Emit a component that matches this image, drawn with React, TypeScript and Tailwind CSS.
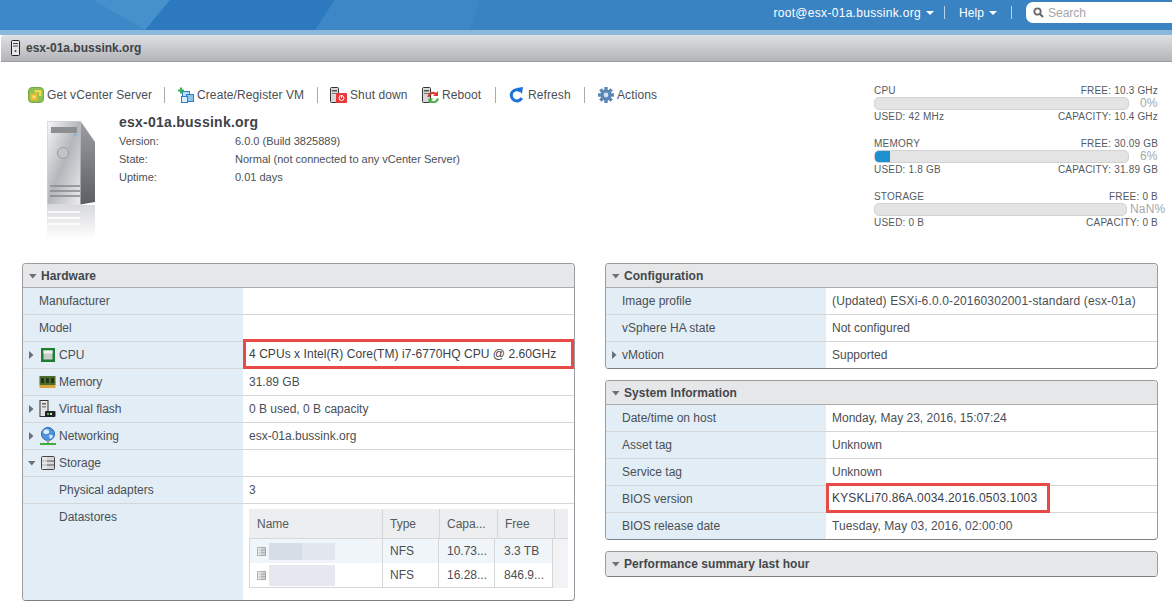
import React from "react";

const Tri = ({ open = false }: { open?: boolean }) => (
  <svg width="8" height="8" viewBox="0 0 8 8" className="shrink-0">
    {open ? <path d="M0 2h7.5L3.75 6.5z" fill="#6b7076" /> : <path d="M1 0v8l4.5-4z" fill="#6b7076" />}
  </svg>
);

const CpuIcon = () => (
  <svg width="14" height="14" viewBox="0 0 14 14"><rect x="0" y="0" width="14" height="14" fill="#1e7d33" /><rect x="2.5" y="2.5" width="9" height="9" fill="#c9cbc9" /><rect x="2.5" y="2.5" width="9" height="3" fill="#eeeeee" /></svg>
);
const MemIcon = () => (
  <svg width="17" height="14" viewBox="0 0 17 14"><rect x="0.5" y="1" width="16" height="9" fill="#4d6b2f" /><rect x="2" y="3" width="3" height="5" fill="#26351a" /><rect x="7" y="3" width="3" height="5" fill="#26351a" /><rect x="12" y="3" width="3" height="5" fill="#26351a" /><rect x="0.5" y="10" width="16" height="3" fill="#d9a63a" /></svg>
);
const FlashIcon = () => (
  <svg width="17" height="18" viewBox="0 0 17 18"><rect x="1" y="0.5" width="8" height="16" fill="#e4e5e7" stroke="#333" /><rect x="3" y="3" width="4" height="1.5" fill="#666" /><rect x="3" y="6" width="4" height="1.5" fill="#888" /><rect x="6" y="11" width="10.5" height="6" rx="1" fill="#222" /><rect x="8" y="13" width="2" height="2" fill="#4fc04f" /><rect x="11" y="13" width="2" height="2" fill="#ddd" /></svg>
);
const NetIcon = () => (
  <svg width="16" height="18" viewBox="0 0 16 18"><circle cx="8" cy="7" r="6.5" fill="#4f93dc" stroke="#2a66b0" /><path d="M4 3q4-2 5 1t-3 3-2-4zM9 8q3-1 4 1-1 3-3 3z" fill="#dcebf8" /><rect x="7" y="13" width="2" height="3" fill="#999" /><rect x="0" y="16" width="16" height="2" fill="#3fae3f" /></svg>
);
const StorIcon = ({ s = 14, light = false }: { s?: number; light?: boolean }) => (
  <svg width={s} height={s} viewBox="0 0 14 14"><rect x="0.5" y="0.5" width="13" height="13" rx="1" fill="#d6d7d8" stroke={light ? "#777" : "#444"} /><path d="M1 5h12M1 9h12" stroke={light ? "#888" : "#555"} /><rect x="1" y="1" width="5" height="12" fill="#f2f2f2" opacity="0.6" /></svg>
);

const VcIcon = () => (
  <svg width="16" height="16" viewBox="0 0 16 16"><rect x="0.5" y="0.5" width="15" height="15" rx="3.5" fill="#8cc152" stroke="#74ab3e" /><path d="M6.5 3h6.5a.5.5 0 0 1 .5.5V9h-2.5V5.5h-4.5z" fill="#f6d84a" /><rect x="2.5" y="6.5" width="7" height="7" rx="1" fill="#eeb92c" /><rect x="4.5" y="8.5" width="3" height="3" fill="#f8e27a" /></svg>
);
const CreateIcon = () => (
  <svg width="16" height="16" viewBox="0 0 16 16"><rect x="4.5" y="4.5" width="7" height="7" fill="#bfe0f6" stroke="#2a7fc4" /><rect x="8.5" y="7.5" width="7" height="7" fill="#8cc4ec" stroke="#2a7fc4" /><rect x="3.5" y="9.5" width="6" height="6" fill="#d8eefb" stroke="#2a7fc4" /><path d="M2 0.5h2v2h2v2H4v2H2v-2H0v-2h2z" fill="#36b24a" /></svg>
);
const HostBase = () => (
  <>
    <rect x="0.5" y="0.5" width="8" height="15" rx="1" fill="#d8d8d8" stroke="#333" />
    <rect x="2" y="3" width="5" height="1.5" fill="#555" />
    <rect x="2" y="6" width="5" height="1" fill="#777" />
  </>
);
const ShutIcon = () => (
  <svg width="17" height="16" viewBox="0 0 17 16"><HostBase /><rect x="6" y="6" width="11" height="10" rx="1" fill="#e8383a" /><circle cx="11.5" cy="11" r="2.5" fill="none" stroke="#fff" /><path d="M11.5 8.5v2.5" stroke="#fff" /></svg>
);
const RebootIcon = () => (
  <svg width="17" height="16" viewBox="0 0 17 16"><HostBase /><path d="M6.5 10A4.5 4.5 0 0 1 14 7" fill="none" stroke="#d93a2f" strokeWidth="2.2" /><path d="M11 9h5V4z" fill="#d93a2f" /><path d="M16 11.5A4.5 4.5 0 0 1 8.5 14" fill="none" stroke="#43ad3c" strokeWidth="2.2" /><path d="M11.5 11.5H6.5V16z" fill="#43ad3c" /></svg>
);
const RefreshIcon = () => (
  <svg width="15" height="16" viewBox="0 0 15 16"><path d="M11.5 4A5.6 5.6 0 1 0 12.8 11" fill="none" stroke="#1b73d8" strokeWidth="3" /><path d="M7.5 1L14 0l-1 7z" fill="#1b73d8" /></svg>
);
const GearIcon = () => (
  <svg width="16" height="16" viewBox="0 0 16 16"><g fill="#5b86b4"><circle cx="8" cy="8" r="5.5" /><rect x="6.3" y="0" width="3.4" height="16" /><rect x="0" y="6.3" width="16" height="3.4" /><rect x="6.3" y="0" width="3.4" height="16" transform="rotate(45 8 8)" /><rect x="6.3" y="0" width="3.4" height="16" transform="rotate(-45 8 8)" /></g><circle cx="8" cy="8" r="2.4" fill="#cfe0f0" /></svg>
);

const ServerArt = () => (
  <svg width="48" height="118" viewBox="0 0 48 118" className="block">
    <defs>
      <linearGradient id="fr" x1="0" y1="0" x2="1" y2="1"><stop offset="0" stopColor="#f6f6f7" /><stop offset="0.5" stopColor="#b4b6bb" /><stop offset="1" stopColor="#ececee" /></linearGradient>
      <linearGradient id="sd" x1="0" y1="0" x2="0" y2="1"><stop offset="0" stopColor="#9c9ea4" /><stop offset="1" stopColor="#5c5e64" /></linearGradient>
      <linearGradient id="rf" x1="0" y1="0" x2="0" y2="1"><stop offset="0" stopColor="#d8d9dc" /><stop offset="1" stopColor="#ffffff" /></linearGradient>
    </defs>
    <rect x="0.25" y="0.25" width="33" height="83" fill="url(#fr)" stroke="#c5c6c9" strokeWidth="0.5" />
    <path d="M33.5 0L48 21v60l-14.5 2.5z" fill="url(#sd)" />
    <rect x="4" y="6" width="26" height="6" fill="#8d8e90" />
    <circle cx="16" cy="32" r="5.5" fill="#c2c3c7" stroke="#9a9ba0" />
    <rect x="27" y="13" width="2" height="2" fill="#6bb6f0" />
    <path d="M3 65h30M3 70h30M3 75h30" stroke="#85868a" strokeWidth="1.4" />
    <rect x="0" y="84" width="48" height="34" fill="url(#rf)" />
    <path d="M1 91h32M1 97h32M1 103h32" stroke="#ffffff" strokeWidth="1.4" />
  </svg>
);

const Tool = ({ icon, label, w, sep, end = "" }: { icon: React.ReactNode; label: string; w: string; sep?: string; end?: string }) => (
  <div className={`flex items-center ${end}`}>
    <span className="flex w-[17px] justify-center">{icon}</span>
    <span className={`ml-[3px] text-[12px] tracking-[0.1px] whitespace-nowrap text-[#4a4f55] ${w}`}>{label}</span>
    {sep && <span className={`h-[16px] w-px bg-[#a8aaad] ${sep}`} />}
  </div>
);

const Gauge = ({ name, free, used, cap, pct, fill = 0, wide = false }: { name: string; free: string; used: string; cap: string; pct: string; fill?: number; wide?: boolean }) => (
  <div className="h-[53px] text-[10px] leading-[13px] tracking-[0.2px] text-[#555a60]">
    <div className="flex justify-between pr-[14px]"><span>{name}</span><span>{free}</span></div>
    <div className="flex h-[13px] items-center">
      <div className={`h-[13px] overflow-hidden rounded-[5px] border border-[#d2d2d2] bg-[#e4e4e4] ${wide ? "w-[253px]" : "w-[255px]"}`}>
        <div className="h-full bg-[#1e90d0]" style={{ width: `${fill}px` }} />
      </div>
      <span className={`text-[12px] text-[#a5a8ab] ${wide ? "ml-[3px]" : "ml-[11px]"}`}>{pct}</span>
    </div>
    <div className="flex justify-between pr-[14px]"><span>{used}</span><span>{cap}</span></div>
  </div>
);

type RowData = { label: string; value?: React.ReactNode; tri?: "open" | "closed"; icon?: React.ReactNode; indent?: boolean };

const Row = ({ r, last }: { r: RowData; last: boolean }) => (
  <div className={`flex ${last ? "h-[26px]" : "h-[27px] border-b border-[#d4d6d8]"}`}>
    <div className="flex w-[220px] shrink-0 items-center bg-[#e2edf6]">
      <span className="flex w-[16px] pl-[5px]">{r.tri && <Tri open={r.tri === "open"} />}</span>
      <span className="flex items-center">
        {r.icon ? <span className="flex w-[17px] justify-center">{r.icon}</span> : null}
        <span className={r.indent ? "ml-[20px]" : r.icon ? "ml-[3px]" : "ml-0"}>{r.label}</span>
      </span>
    </div>
    <div className="flex min-w-0 flex-1 items-center pl-[6px]">{r.value}</div>
  </div>
);

const Panel = ({ title, rows, children, collapsed = false }: { title: string; rows?: RowData[]; children?: React.ReactNode; collapsed?: boolean }) => (
  <div className="overflow-hidden rounded-[4px] border border-[#9a9c9f] border-b-[#7d7f82] text-[12px] text-[#4a4f55]">
    <div className={`flex h-[24px] items-center gap-[4px] bg-[#e6e7e8] pl-[6px] text-[12px] font-bold tracking-[0.05px] text-[#43474d] ${collapsed ? "" : "border-b border-[#a9abad]"}`}>
      <Tri open />
      <span>{title}</span>
    </div>
    {rows?.map((r, i) => (
      <Row key={r.label} r={r} last={i === rows.length - 1 && !children} />
    ))}
    {children}
  </div>
);

const Red = ({ children, w, t }: { children: React.ReactNode; w: string; t: string }) => (
  <span className={`-ml-[6px] mb-[2px] flex h-[30px] items-center border-[3px] border-[#e84a46] pl-[3px] text-[#3c4046] ${w} ${t}`}>{children}</span>
);

const BodyCell = ({ children, pl = "pl-[7px]", line = true }: { children: React.ReactNode; pl?: string; line?: boolean }) => (
  <div className={`flex w-[56px] items-center whitespace-nowrap ${pl} ${line ? "border-r border-[#d4d6d8]" : ""}`}>{children}</div>
);

const HeadCell = ({ children, w, pl = "pl-[7px]" }: { children: React.ReactNode; w: string; pl?: string }) => (
  <div className={`flex items-center border-r border-[#d4d6d8] text-[#555a60] ${w} ${pl}`}>{children}</div>
);

const Datastores = () => (
  <div className="flex h-[96px]">
    <div className="w-[220px] shrink-0 bg-[#e2edf6] pl-[36px] pt-[4px]">Datastores</div>
    <div className="flex-1 pl-[6px] pt-[5px]">
      <div className="w-[319px]">
        <div className="flex h-[30px] border-b border-[#d4d6d8] bg-[#eceef0]">
          <HeadCell w="w-[134px]" pl="pl-[8px]">Name</HeadCell>
          <HeadCell w="w-[57px]">Type</HeadCell>
          <HeadCell w="w-[58px]">Capa...</HeadCell>
          <HeadCell w="w-[57px]">Free</HeadCell>
        </div>
        <div className="flex">
          <div className="w-[304px] border-r border-b border-l border-[#d4d6d8]">
            <div className="flex h-[24px] bg-[#f0f5f9]">
              <div className="flex w-[133px] items-center border-r border-[#d4d6d8] pl-[7px]">
                <StorIcon s={9} light />
                <span className="ml-[3px] h-[17px] w-[66px] bg-[linear-gradient(90deg,#d5dde7_50%,#e2e7ee_50%)]" />
              </div>
              <BodyCell>NFS</BodyCell>
              <BodyCell pl="pl-[8px]">10.73...</BodyCell>
              <BodyCell pl="pl-[9px]" line={false}>3.3 TB</BodyCell>
            </div>
            <div className="flex h-[24px]">
              <div className="flex w-[133px] items-center border-r border-[#d4d6d8] pl-[7px]">
                <StorIcon s={9} light />
                <span className="ml-[3px] h-[21px] w-[66px] bg-[#e5e8ee]" />
              </div>
              <BodyCell>NFS</BodyCell>
              <BodyCell pl="pl-[8px]">16.28...</BodyCell>
              <BodyCell pl="pl-[9px]" line={false}>846.9...</BodyCell>
            </div>
          </div>
          <div className="w-[15px] bg-[#f2f3f4]" />
        </div>
      </div>
    </div>
  </div>
);

export default function App() {
  const hw: RowData[] = [
    { label: "Manufacturer" },
    { label: "Model" },
    { label: "CPU", tri: "closed", icon: <CpuIcon />, value: <Red w="w-[331px]" t="tracking-[0.06px]">4 CPUs x Intel(R) Core(TM) i7-6770HQ CPU @ 2.60GHz</Red> },
    { label: "Memory", icon: <MemIcon />, value: "31.89 GB" },
    { label: "Virtual flash", tri: "closed", icon: <FlashIcon />, value: "0 B used, 0 B capacity" },
    { label: "Networking", tri: "closed", icon: <NetIcon />, value: "esx-01a.bussink.org" },
    { label: "Storage", tri: "open", icon: <StorIcon />, value: "" },
    { label: "Physical adapters", indent: true, value: "3" },
  ];
  const cfg: RowData[] = [
    { label: "Image profile", value: <span className="tracking-[0.15px]">(Updated) ESXi-6.0.0-20160302001-standard (esx-01a)</span> },
    { label: "vSphere HA state", value: "Not configured" },
    { label: "vMotion", tri: "closed", value: "Supported" },
  ];
  const sys: RowData[] = [
    { label: "Date/time on host", value: "Monday, May 23, 2016, 15:07:24" },
    { label: "Asset tag", value: "Unknown" },
    { label: "Service tag", value: "Unknown" },
    { label: "BIOS version", value: <Red w="w-[224px]" t="tracking-[0.18px]">KYSKLi70.86A.0034.2016.0503.1003</Red> },
    { label: "BIOS release date", value: <span className="tracking-[0.1px]">Tuesday, May 03, 2016, 02:00:00</span> },
  ];

  return (
    <div className="h-[612px] w-[1172px] overflow-hidden bg-white font-['Liberation_Sans',Arial,sans-serif] text-[12px] text-[#4a4f55]">
      <header className="relative flex h-[30px] items-center justify-end bg-[#3a83c2] pb-[5px] text-[12px] text-white">
        <svg className="absolute inset-0" width="1172" height="30" viewBox="0 0 1172 30">
          <path d="M0 0H93L145 30H0z" fill="#3c88c8" />
          <path d="M93 0H335L315 30H145z" fill="#4691cc" />
          <path d="M145 30L170 0H335L315 30z" fill="#2c79bf" />
          <path d="M315 30L335 0H480L470 30z" fill="#3d87c6" />
        </svg>
        <div className="relative flex items-center">
          <span className="tracking-[0.3px]">root@esx-01a.bussink.org</span>
          <svg className="ml-[5px]" width="8" height="4" viewBox="0 0 8 4"><path d="M0 0h8L4 4z" fill="#fff" /></svg>
          <span className="mr-[14px] ml-[10px] h-[13px] w-px bg-[#b9d4ea]" />
          <span className="tracking-[0.1px]">Help</span>
          <svg className="ml-[5px]" width="8" height="4" viewBox="0 0 8 4"><path d="M0 0h8L4 4z" fill="#fff" /></svg>
          <span className="mx-[14px] h-[13px] w-px bg-[#b9d4ea]" />
          <div className="flex h-[21px] w-[146px] items-center rounded-l-[7px] bg-white pl-[7px] text-[#a4a6a8]">
            <svg width="11" height="11" viewBox="0 0 11 11"><circle cx="4.5" cy="4.5" r="3.2" fill="none" stroke="#666" strokeWidth="1.8" /><path d="M7 7l3 3" stroke="#666" strokeWidth="2" /></svg>
            <span className="ml-[4px]">Search</span>
          </div>
        </div>
      </header>
      <div className="h-[5px] bg-[#8ab7dc]" />
      <div className="ml-[1px] flex h-[27px] items-center rounded-tl-[4px] border-b border-[#9b9da0] bg-[linear-gradient(#dfe0e3,#b4b5b8)] pl-[10px] text-[12px] font-bold text-[#3f4348]">
        <svg width="9" height="16" viewBox="0 0 9 16"><rect x="0.5" y="0.5" width="8" height="15" rx="1" fill="#e8e8e8" stroke="#222" /><path d="M2 3.5h5M2 6h5" stroke="#444" /><circle cx="4.5" cy="11" r="1" fill="#444" /></svg>
        <span className="ml-[6px]">esx-01a.bussink.org</span>
      </div>

      <div className="flex h-[201px] pl-[27px]">
        <div className="w-[847px]">
          <div className="mt-[21px] flex h-[24px] items-center">
            <Tool icon={<VcIcon />} label="Get vCenter Server" w="w-[104px]" sep="mr-[12px] ml-[13px]" />
            <Tool icon={<CreateIcon />} label="Create/Register VM" w="w-[107px]" sep="mr-[12px] ml-[13px]" />
            <Tool icon={<ShutIcon />} label="Shut down" w="w-[58px]" end="mr-[14px]" />
            <Tool icon={<RebootIcon />} label="Reboot" w="w-[40px]" sep="mr-[12px] ml-[13px]" />
            <Tool icon={<RefreshIcon />} label="Refresh" w="w-[42px]" sep="mr-[12px] ml-[14px]" />
            <Tool icon={<GearIcon />} label="Actions" w="w-[40px]" />
          </div>
          <div className="mt-[4px] flex">
            <div className="ml-[20px] w-[72px] pt-[10px]"><ServerArt /></div>
            <div className="pt-[1px]">
              <div className="text-[14px] leading-[20px] font-bold tracking-[0.25px] text-[#3f4348]">esx-01a.bussink.org</div>
              <div className="text-[11px] leading-[18px] text-[#4a4f55]">
                <div className="flex"><span className="w-[116px]">Version:</span><span>6.0.0 (Build 3825889)</span></div>
                <div className="flex"><span className="w-[116px]">State:</span><span>Normal (not connected to any vCenter Server)</span></div>
                <div className="flex"><span className="w-[116px]">Uptime:</span><span>0.01 days</span></div>
              </div>
            </div>
          </div>
        </div>
        <div className="w-[298px] pt-[22px]">
          <Gauge name="CPU" free="FREE: 10.3 GHz" used="USED: 42 MHz" cap="CAPACITY: 10.4 GHz" pct="0%" />
          <Gauge name="MEMORY" free="FREE: 30.09 GB" used="USED: 1.8 GB" cap="CAPACITY: 31.89 GB" pct="6%" fill={15} />
          <Gauge name="STORAGE" free="FREE: 0 B" used="USED: 0 B" cap="CAPACITY: 0 B" pct="NaN%" wide />
        </div>
      </div>

      <div className="flex gap-[30px] pl-[22px]">
        <div className="w-[553px]">
          <Panel title="Hardware" rows={hw}><Datastores /></Panel>
        </div>
        <div className="flex w-[553px] flex-col gap-[11px]">
          <Panel title="Configuration" rows={cfg} />
          <Panel title="System Information" rows={sys} />
          <Panel title="Performance summary last hour" collapsed />
        </div>
      </div>
    </div>
  );
}
